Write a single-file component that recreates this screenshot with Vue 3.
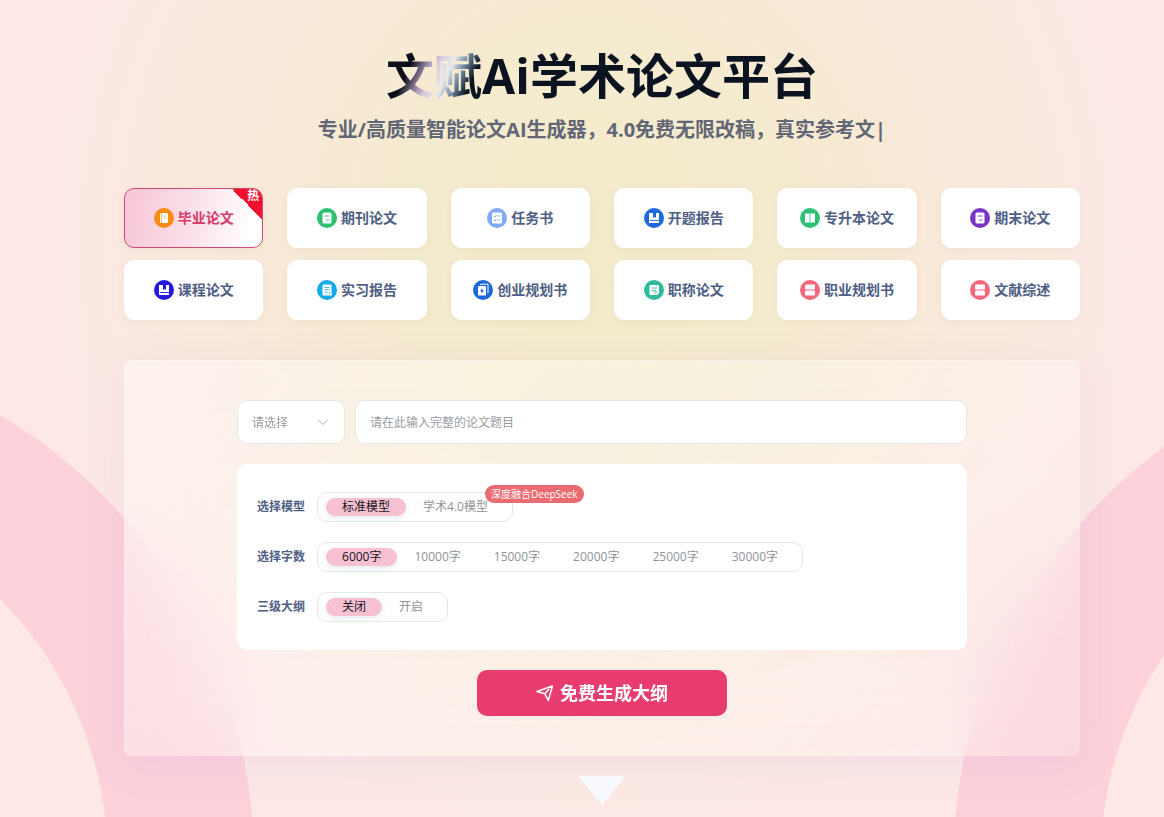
<script setup>
import { ref } from 'vue'

const types = [
  { name: '毕业论文', color: '#f88c16', icon: 'book', hot: true },
  { name: '期刊论文', color: '#2cc070', icon: 'lines' },
  { name: '任务书', color: '#7fa9f2', icon: 'checks' },
  { name: '开题报告', color: '#1d68de', icon: 'bookmark' },
  { name: '专升本论文', color: '#2cc078', icon: 'open' },
  { name: '期末论文', color: '#7a35c8', icon: 'lines' },
  { name: '课程论文', color: '#2418dc', icon: 'bookmark' },
  { name: '实习报告', color: '#0fabe8', icon: 'report' },
  { name: '创业规划书', color: '#1d68d8', icon: 'copy' },
  { name: '职称论文', color: '#2fbc9c', icon: 'edit' },
  { name: '职业规划书', color: '#f4687e', icon: 'drawer' },
  { name: '文献综述', color: '#f4687e', icon: 'drawer' }
]
const activeType = ref('毕业论文')

const groups = [
  { key: 'model', label: '选择模型', options: ['标准模型', '学术4.0模型'], badge: '深度融合DeepSeek' },
  { key: 'words', label: '选择字数', options: ['6000字', '10000字', '15000字', '20000字', '25000字', '30000字'] },
  { key: 'outline', label: '三级大纲', options: ['关闭', '开启'] }
]
const picked = ref({ model: '标准模型', words: '6000字', outline: '关闭' })
const category = ref('')
const title = ref('')
</script>

<template>
  <div class="page">
    <svg class="rings" viewBox="0 0 1164 817" preserveAspectRatio="xMidYMax slice" aria-hidden="true">
      <g fill="none" stroke="#fcd1da">
        <circle cx="-266" cy="862" r="447" stroke-width="146" />
        <circle cx="1468" cy="862" r="441" stroke-width="147" />
      </g>
    </svg>

    <main class="content">
      <header class="hero">
        <h1>文赋Ai学术论文平台</h1>
        <p>专业/高质量智能论文AI生成器，4.0免费无限改稿，真实参考文|</p>
      </header>

      <nav class="types" aria-label="论文类型">
        <button
          v-for="t in types"
          :key="t.name"
          type="button"
          class="type"
          :class="{ active: t.name === activeType }"
          @click="activeType = t.name"
        >
          <svg viewBox="0 0 20 20" width="20" height="20" aria-hidden="true">
            <circle cx="10" cy="10" r="10" :fill="t.color" />
            <g v-if="t.icon === 'book'">
              <rect x="6" y="5" width="8" height="10" rx="1" fill="#fff" />
              <path d="M7.500 5v10M9.500 8h3M9.500 10h3" fill="none" :stroke="t.color" stroke-width="0.6" />
            </g>
            <g v-else-if="t.icon === 'lines'">
              <rect x="5.500" y="4.500" width="9" height="11" rx="1.500" fill="#fff" />
              <path d="M7.500 8h5M9 12h3.500" fill="none" :stroke="t.color" stroke-width="0.9" />
            </g>
            <g v-else-if="t.icon === 'checks'">
              <rect x="5" y="4.500" width="10" height="11" rx="1" fill="#fff" />
              <path d="M7 8l1 1 1.500-2M10.500 8H13M7 12l1 1 1.500-2M10.500 12H13" fill="none" :stroke="t.color" stroke-width="0.9" />
            </g>
            <g v-else-if="t.icon === 'bookmark'">
              <path d="M5 5h4v5l1.500-1.200L12 10V5h3v10H5z" fill="#fff" />
              <path d="M6 12.500h9" :stroke="t.color" stroke-width="0.9" />
            </g>
            <g v-else-if="t.icon === 'open'">
              <path d="M5 5.500h4.600v9H5zM10.400 5.500H15v9h-4.600z" fill="#fff" />
              <path d="M9.500 14h1" stroke="#fff" />
            </g>
            <g v-else-if="t.icon === 'report'">
              <path d="M6 4.500h8.500v8.500h.5v2.500H5.500V6z" fill="#fff" />
              <path d="M7.500 7.500h5M7.500 9.700h5M7.500 12h3M12.800 12v2.500" fill="none" :stroke="t.color" stroke-width="0.8" />
            </g>
            <g v-else-if="t.icon === 'copy'">
              <path d="M7.500 5V4.200H15V13" fill="none" stroke="#fff" />
              <rect x="5" y="6" width="8" height="9.500" rx="1" fill="#fff" />
              <path d="M9 8.500l1.500 2.200-1.500 2.300-1.500-2.300z" :fill="t.color" />
            </g>
            <g v-else-if="t.icon === 'edit'">
              <path d="M6.500 5H14a1 1 0 0 1 1 1v7l-2 2H6.500a1 1 0 0 1-1-1V6a1 1 0 0 1 1-1z" fill="#fff" />
              <path d="M7.500 8h5.500M7.500 10.500h2.500M11 13.500v-3.200l2.500 2" fill="none" :stroke="t.color" stroke-width="0.9" />
            </g>
            <g v-else>
              <rect x="5" y="4.500" width="10" height="5" rx="1.200" fill="#fff" />
              <rect x="5" y="10.500" width="10" height="5" rx="1.200" fill="#fff" />
            </g>
          </svg>
          <span>{{ t.name }}</span>
          <span v-if="t.hot" class="hot">热</span>
        </button>
      </nav>

      <form class="panel" @submit.prevent>
        <div class="fields">
          <div class="picker">
            <select v-model="category" aria-label="请选择">
              <option value="">请选择</option>
            </select>
            <svg viewBox="0 0 12 12" width="12" height="12" aria-hidden="true">
              <path d="M1 3.500l5 5 5-5" fill="none" stroke="#a8abb2" />
            </svg>
          </div>
          <input v-model="title" class="title" type="text" aria-label="论文题目" placeholder="请在此输入完整的论文题目" />
        </div>

        <div class="options">
          <div v-for="g in groups" :key="g.key" class="row" role="radiogroup" :aria-labelledby="g.key">
            <span :id="g.key" class="label">{{ g.label }}</span>
            <div class="choices">
              <label v-for="o in g.options" :key="o" class="choice">
                <input v-model="picked[g.key]" type="radio" :name="g.key" :value="o" />
                <span>{{ o }}</span>
              </label>
              <span v-if="g.badge" class="badge">{{ g.badge }}</span>
            </div>
          </div>
        </div>

        <button class="submit" type="submit">
          <svg viewBox="0 0 18 18" width="18" height="18" aria-hidden="true">
            <path d="M1 7.500L16.500 2 12.300 16.500 8.800 9.800zM8.800 9.800l4.200-4.600" fill="none" stroke="#fff" stroke-width="1.500" stroke-linejoin="round" stroke-linecap="round" />
          </svg>
          <span>免费生成大纲</span>
        </button>
      </form>

      <div class="arrow"></div>
    </main>
  </div>
</template>

<style>
body {
  margin: 0;
}
</style>

<style scoped>
.page {
  position: relative;
  box-sizing: border-box;
  min-height: 100vh;
  padding: 48px 84px 12px 124px;
  overflow: hidden;
  font-family: "Open Sans", "Noto Sans CJK SC", sans-serif;
  font-size: 12px;
  background:
    radial-gradient(ellipse 48% 74% at 51% 30%, #f4ebcb 0%, #f5ebcf 35%, rgba(248, 234, 215, 0.7) 65%, rgba(253, 232, 230, 0) 100%),
    #fde8e6;
}

.rings {
  position: absolute;
  inset: 0;
  width: 100%;
  height: 100%;
}

.content {
  position: relative;
}

button,
input,
select {
  box-sizing: border-box;
  font-family: inherit;
}

.hero {
  text-align: center;
}

h1 {
  display: inline-block;
  margin: 0;
  font-size: 48px;
  line-height: 56px;
  font-weight: 700;
  color: transparent;
  background: linear-gradient(115deg, #0b0e18 7%, #a795b4 11%, #d9cbdc 13%, #e4e9f2 16%, #6d8499 19%, #0b1220 22%);
  background-clip: text;
  -webkit-background-clip: text;
}

.hero p {
  margin: 12px 0 44px;
  font-size: 20px;
  line-height: 28px;
  font-weight: 700;
  color: #626675;
}

.types {
  display: grid;
  grid-template-columns: repeat(6, 1fr);
  gap: 12px 24px;
}

.type {
  position: relative;
  display: flex;
  align-items: center;
  justify-content: center;
  gap: 4px;
  height: 60px;
  padding: 0;
  overflow: hidden;
  border: 1px solid #fff;
  border-radius: 10px;
  background: #fff;
  box-shadow: 0 2px 8px rgba(120, 100, 60, 0.06);
  color: #4f5e84;
  font-size: 14px;
  line-height: 20px;
  font-weight: 600;
}

.type.active {
  border-color: #cf4a70;
  background: linear-gradient(100deg, #f7c5d7 0%, #fbe0ea 50%, #fff 90%);
  color: #d63b66;
}

.hot {
  position: absolute;
  top: 0;
  right: 0;
  width: 30px;
  height: 30px;
  padding-right: 3px;
  box-sizing: border-box;
  background: linear-gradient(45deg, transparent 50%, #f5102f 50%);
  color: #fff;
  font-size: 12px;
  line-height: 14px;
  text-align: right;
}

.panel {
  display: flex;
  flex-direction: column;
  align-items: center;
  gap: 20px;
  box-sizing: border-box;
  margin-top: 40px;
  padding: 40px 113px;
  border-radius: 8px;
  background: linear-gradient(135deg, rgba(255, 255, 255, 0.4), rgba(255, 255, 255, 0.2));
  box-shadow: inset 1px 1px 0 rgba(255, 255, 255, 0.3), 0 8px 40px rgba(170, 150, 220, 0.12);
  backdrop-filter: blur(40px);
}

.fields {
  display: flex;
  gap: 10px;
  width: 100%;
}

.picker {
  position: relative;
  flex: 0 0 108px;
}

.picker select {
  width: 100%;
  height: 44px;
  padding: 0 14px;
  appearance: none;
  border: 1px solid #e8e6e6;
  border-radius: 10px;
  background: #fff;
  color: #999ca3;
  font-size: 12px;
}

.picker svg {
  position: absolute;
  top: 16px;
  right: 16px;
  pointer-events: none;
}

.title {
  flex: 1;
  min-width: 0;
  height: 44px;
  padding: 0 14px;
  border: 1px solid #e8e6e6;
  border-radius: 10px;
  background: #fff;
  font-size: 12px;
}

.title::placeholder {
  color: #999ca3;
}

.options {
  display: flex;
  flex-direction: column;
  gap: 20px;
  width: 100%;
  box-sizing: border-box;
  padding: 28px 20px;
  border-radius: 10px;
  background: #fff;
}

.row {
  display: flex;
  align-items: center;
  gap: 12px;
}

.label {
  color: #4f5e84;
  line-height: 18px;
  font-weight: 600;
}

.choices {
  position: relative;
  display: flex;
  align-items: center;
  gap: 1px;
  box-sizing: border-box;
  height: 30px;
  padding: 0 8px;
  border: 1px solid #e3e7e9;
  border-radius: 10px;
}

.choice {
  position: relative;
  cursor: pointer;
}

.choice input {
  position: absolute;
  inset: 0;
  margin: 0;
  opacity: 0;
}

.choice span {
  display: block;
  padding: 0 16px;
  border-radius: 9px;
  color: #909399;
  line-height: 18px;
}

.choice input:checked + span {
  background: #f7c1d2;
  box-shadow: 0 2px 6px rgba(120, 150, 170, 0.2);
  color: #15151c;
}

.badge {
  position: absolute;
  top: -8px;
  left: 167px;
  padding: 0 6px;
  border-radius: 9px;
  background: #ea6c70;
  color: #fff;
  font-size: 10px;
  line-height: 18px;
  white-space: nowrap;
}

.submit {
  display: flex;
  align-items: center;
  justify-content: center;
  gap: 6px;
  width: 250px;
  height: 46px;
  padding: 0;
  border: 0;
  border-radius: 10px;
  background: #e83c6e;
  color: #fff;
  font-size: 18px;
  line-height: 26px;
  font-weight: 700;
}

.arrow {
  width: 48px;
  height: 29px;
  margin: 20px auto 0;
  background: #f8f8ff;
  clip-path: polygon(0 0, 100% 0, 50% 100%);
}
</style>
